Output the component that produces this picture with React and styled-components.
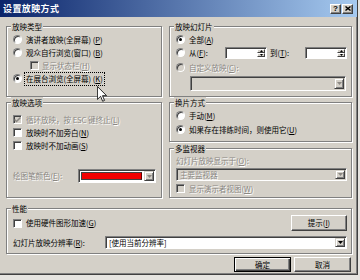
import React from "react";
import styled, { createGlobalStyle } from "styled-components";

const GlobalStyle = createGlobalStyle`
  html, body {
    margin: 0;
    padding: 0;
    background: #e6e4e0;
  }
`;

const FONT = `"Noto Sans CJK SC", "Liberation Sans", sans-serif`;

const Dialog = styled.div`
  position: relative;
  width: 358px;
  height: 275px;
  box-sizing: border-box;
  background: #d4d0c8;
  border-right: 1px solid #404040;
  border-bottom: 1px solid #404040;
  box-shadow: inset -1px -1px 0 #808080;
  font-family: ${FONT};
  font-size: 7.5px;
  line-height: 13px;
  color: #000;
  overflow: hidden;
`;

const TitleBar = styled.div`
  height: 17px;
  display: flex;
  align-items: center;
  gap: 1px;
  padding: 0 4px 0 3px;
  background: linear-gradient(to right, #0a246a, #a6caf0);
`;

const TitleText = styled.div`
  flex: 1;
  color: #fff;
  font-weight: bold;
  font-size: 9px;
  letter-spacing: 0.4px;
`;

const CapButton = styled.div`
  width: 11px;
  height: 10px;
  box-sizing: border-box;
  background: #d4d0c8;
  border: 1px solid;
  border-color: #fff #404040 #404040 #fff;
  box-shadow: inset -1px -1px 0 #808080;
  display: flex;
  align-items: center;
  justify-content: center;
  font: bold 8px/1 "Liberation Sans", sans-serif;
`;

const Content = styled.div`
  padding: 9px 0 0 6px;
`;

const Columns = styled.div`
  display: grid;
  grid-template-columns: 156px 183px;
  column-gap: 7px;
  row-gap: 5px;
`;

const Stack = styled.div`
  display: flex;
  flex-direction: column;
  gap: 6px;
`;

const Group = styled.div`
  box-sizing: border-box;
  height: ${(p) => p.h}px;
  margin-top: ${(p) => p.mt || 0}px;
  width: ${(p) => (p.w ? `${p.w}px` : "auto")};
  border: 1px solid #808080;
  box-shadow: inset 1px 1px 0 #fff, 1px 1px 0 #fff;
  padding: 0 4px 0 6px;
`;

const Legend = styled.div`
  display: table;
  height: 11px;
  line-height: 11px;
  margin: -6px 0 0 -2px;
  padding: 0 1px;
  background: #d4d0c8;
`;

const Row = styled.div`
  display: flex;
  align-items: center;
  gap: ${(p) => (p.gap !== undefined ? p.gap : 3)}px;
  height: ${(p) => p.h || 13}px;
  margin-top: ${(p) => p.mt || 0}px;
  margin-left: ${(p) => p.indent || 0}px;
  white-space: nowrap;
`;

const Label = styled.span`
  display: inline-block;
  width: ${(p) => (p.w ? `${p.w}px` : "auto")};
  margin-left: ${(p) => p.ml || 0}px;
  color: ${(p) => (p.disabled ? "#8a8782" : "#000")};
  text-shadow: ${(p) => (p.disabled ? "1px 1px 0 #fff" : "none")};
  padding: 0 1px;
  outline: ${(p) => (p.focus ? "1px dotted #000" : "none")};
  line-height: 12px;
  u {
    text-decoration: underline;
    text-underline-offset: 1px;
  }
`;

const Radio = styled.span`
  position: relative;
  flex: none;
  width: 9px;
  height: 9px;
  box-sizing: border-box;
  border-radius: 50%;
  border: 1px solid;
  border-color: #808080 #fff #fff #808080;
  box-shadow: inset 1px 1px 0 #404040;
  background: ${(p) => (p.disabled ? "#d4d0c8" : "#fff")};
  &::after {
    content: "";
    display: ${(p) => (p.checked ? "block" : "none")};
    position: absolute;
    left: 2px;
    top: 2px;
    width: 3px;
    height: 3px;
    border-radius: 50%;
    background: #000;
  }
`;

const Check = styled.span`
  flex: none;
  width: 9px;
  height: 9px;
  box-sizing: border-box;
  border: 1px solid;
  border-color: #808080 #fff #fff #808080;
  box-shadow: inset 1px 1px 0 #404040;
  background: ${(p) => (p.disabled ? "#d4d0c8" : "#fff")};
  display: flex;
  align-items: center;
  justify-content: center;
`;

const Field = styled.div`
  flex: ${(p) => (p.grow ? 1 : "none")};
  position: relative;
  display: flex;
  align-items: stretch;
  box-sizing: border-box;
  width: ${(p) => (p.w ? `${p.w}px` : "auto")};
  height: ${(p) => p.h || 13}px;
  margin-left: ${(p) => p.ml || 0}px;
  border: 1px solid;
  border-color: #808080 #fff #fff #808080;
  box-shadow: inset 1px 1px 0 #404040;
  background: ${(p) => (p.disabled ? "#d4d0c8" : "#fff")};
  padding: 1px;
`;

const FieldText = styled.span`
  flex: 1;
  padding-left: 2px;
  line-height: 10px;
  color: ${(p) => (p.disabled ? "#8a8782" : "#000")};
  text-shadow: ${(p) => (p.disabled ? "1px 1px 0 #fff" : "none")};
`;

const Swatch = styled.span`
  flex: 1;
  margin: 1px 2px 1px 1px;
  background: #f20000;
  border: 1px solid #404040;
  border-right-color: #600;
`;

const DropButton = styled.span`
  flex: none;
  width: 10px;
  box-sizing: border-box;
  background: #d4d0c8;
  border: 1px solid;
  border-color: #d4d0c8 #404040 #404040 #d4d0c8;
  box-shadow: inset 1px 1px 0 #fff, inset -1px -1px 0 #808080;
  display: flex;
  align-items: center;
  justify-content: center;
`;

const SpinStack = styled.span`
  flex: none;
  width: 8px;
  display: flex;
  flex-direction: column;
  margin-left: auto;
`;

const SpinButton = styled.span`
  flex: 1;
  box-sizing: border-box;
  background: #d4d0c8;
  border: 1px solid;
  border-color: #fff #404040 #404040 #fff;
  display: flex;
  align-items: center;
  justify-content: center;
`;

const PushButton = styled.button`
  box-sizing: border-box;
  width: ${(p) => p.w || 57}px;
  height: ${(p) => p.h || 15}px;
  margin-left: ${(p) => (p.push ? "auto" : "0")};
  padding: 0;
  font-family: ${FONT};
  font-size: 7.5px;
  line-height: 10px;
  color: #000;
  background: #d4d0c8;
  border: 1px solid;
  border-color: ${(p) => (p.primary ? "#000" : "#fff #404040 #404040 #fff")};
  box-shadow: ${(p) =>
    p.primary
      ? "inset 1px 1px 0 #fff, inset -1px -1px 0 #404040, inset -2px -2px 0 #808080"
      : "inset -1px -1px 0 #808080"};
`;

const ButtonBar = styled.div`
  display: flex;
  justify-content: flex-end;
  gap: 3px;
  margin-top: 3px;
  padding-right: 6px;
`;

const Cursor = styled.svg`
  position: absolute;
  left: 97px;
  top: 86px;
`;

const Arrow = ({ disabled }) => (
  <svg width="5" height="3" viewBox="0 0 5 3">
    <path d="M0 0H5L2.5 3Z" fill={disabled ? "#8a8782" : "#000"} />
  </svg>
);

const SpinArrow = ({ up }) => (
  <svg width="3" height="2" viewBox="0 0 3 2">
    <path d={up ? "M0 2H3L1.5 0Z" : "M0 0H3L1.5 2Z"} fill="#000" />
  </svg>
);

const Tick = () => (
  <svg width="7" height="6" viewBox="0 0 7 6">
    <path d="M0.5 2.5L2.5 4.5L6.5 0.5" stroke="#8a8782" strokeWidth="1.5" fill="none" />
  </svg>
);

const Option = ({ checked, disabled, focus, children }) => (
  <>
    <Radio checked={checked} disabled={disabled} />
    <Label disabled={disabled} focus={focus}>
      {children}
    </Label>
  </>
);

const Box = ({ ticked, disabled, children }) => (
  <>
    <Check disabled={disabled}>{ticked && <Tick />}</Check>
    <Label disabled={disabled}>{children}</Label>
  </>
);

const Spin = ({ ml }) => (
  <Field w={42} h={12} ml={ml}>
    <SpinStack>
      <SpinButton>
        <SpinArrow up />
      </SpinButton>
      <SpinButton>
        <SpinArrow />
      </SpinButton>
    </SpinStack>
  </Field>
);

export default function App() {
  return (
    <>
      <GlobalStyle />
      <Dialog>
        <TitleBar>
          <TitleText>设置放映方式</TitleText>
          <CapButton>?</CapButton>
          <CapButton>
            <svg width="6" height="5" viewBox="0 0 6 5">
              <path d="M0.5 0.5L5.5 4.5M5.5 0.5L0.5 4.5" stroke="#000" strokeWidth="1.4" />
            </svg>
          </CapButton>
        </TitleBar>

        <Content>
          <Columns>
            <Group h={71}>
              <Legend>放映类型</Legend>
              <Row mt={1}>
                <Option>
                  演讲者放映(全屏幕) (<u>P</u>)
                </Option>
              </Row>
              <Row>
                <Option>
                  观众自行浏览(窗口) (<u>B</u>)
                </Option>
              </Row>
              <Row indent={17} gap={2}>
                <Box disabled>
                  显示状态栏(<u>H</u>)
                </Box>
              </Row>
              <Row>
                <Option checked focus>
                  在展台浏览(全屏幕) (<u>K</u>)
                </Option>
              </Row>
            </Group>

            <Group h={71}>
              <Legend>放映幻灯片</Legend>
              <Row mt={1}>
                <Option checked>
                  全部(<u>A</u>)
                </Option>
              </Row>
              <Row>
                <Radio />
                <Label w={33}>
                  从(<u>F</u>):
                </Label>
                <Spin ml={0} />
                <Label w={35} ml={-1}>
                  到(<u>T</u>):
                </Label>
                <Spin ml={-3} />
              </Row>
              <Row mt={2}>
                <Option disabled>
                  自定义放映(<u>C</u>):
                </Option>
              </Row>
              <Row mt={2} h={15}>
                <Field w={156} h={15} ml={14} disabled>
                  <FieldText />
                  <DropButton>
                    <Arrow disabled />
                  </DropButton>
                </Field>
              </Row>
            </Group>

            <Group h={96}>
              <Legend>放映选项</Legend>
              <Row mt={5}>
                <Box ticked disabled>
                  循环放映，按 ESC 键终止(<u>L</u>)
                </Box>
              </Row>
              <Row>
                <Box>
                  放映时不加旁白(<u>N</u>)
                </Box>
              </Row>
              <Row>
                <Box>
                  放映时不加动画(<u>S</u>)
                </Box>
              </Row>
              <Row mt={17} h={14} gap={0}>
                <Label w={64} ml={-1} disabled>
                  绘图笔颜色(<u>E</u>):
                </Label>
                <Field w={78} h={14}>
                  <Swatch />
                  <DropButton>
                    <Arrow disabled />
                  </DropButton>
                </Field>
              </Row>
            </Group>

            <Stack>
              <Group h={40}>
                <Legend>换片方式</Legend>
                <Row mt={1}>
                  <Option>
                    手动(<u>M</u>)
                  </Option>
                </Row>
                <Row mt={1}>
                  <Option checked>
                    如果存在排练时间，则使用它(<u>U</u>)
                  </Option>
                </Row>
              </Group>
              <Group h={50}>
                <Legend>多监视器</Legend>
                <Row>
                  <Label ml={-1} disabled>
                    幻灯片放映显示于(<u>O</u>):
                  </Label>
                </Row>
                <Row mt={1}>
                  <Field grow h={13} disabled>
                    <FieldText disabled>主要监视器</FieldText>
                    <DropButton>
                      <Arrow disabled />
                    </DropButton>
                  </Field>
                </Row>
                <Row mt={1}>
                  <Box disabled>
                    显示演示者视图(<u>W</u>)
                  </Box>
                </Row>
              </Group>
            </Stack>
          </Columns>

          <Group h={46} mt={10} w={346}>
            <Legend>性能</Legend>
            <Row mt={1} h={16}>
              <Box>
                使用硬件图形加速(<u>G</u>)
              </Box>
              <PushButton push w={56} h={16}>
                提示(<u>I</u>)
              </PushButton>
            </Row>
            <Row mt={5} gap={0}>
              <Label w={91} ml={-1}>
                幻灯片放映分辨率(<u>R</u>):
              </Label>
              <Field grow h={13}>
                <FieldText>[使用当前分辨率]</FieldText>
                <DropButton>
                  <Arrow />
                </DropButton>
              </Field>
            </Row>
          </Group>

          <ButtonBar>
            <PushButton primary>确定</PushButton>
            <PushButton>取消</PushButton>
          </ButtonBar>
        </Content>

        <Cursor width="10" height="16" viewBox="0 0 12 19">
          <path
            d="M0.5 0.5V16L4.3 12.3L6.8 18.2L9 17.2L6.6 11.5H11.5Z"
            fill="#fff"
            stroke="#000"
            strokeWidth="1"
            strokeLinejoin="miter"
          />
        </Cursor>
      </Dialog>
    </>
  );
}
